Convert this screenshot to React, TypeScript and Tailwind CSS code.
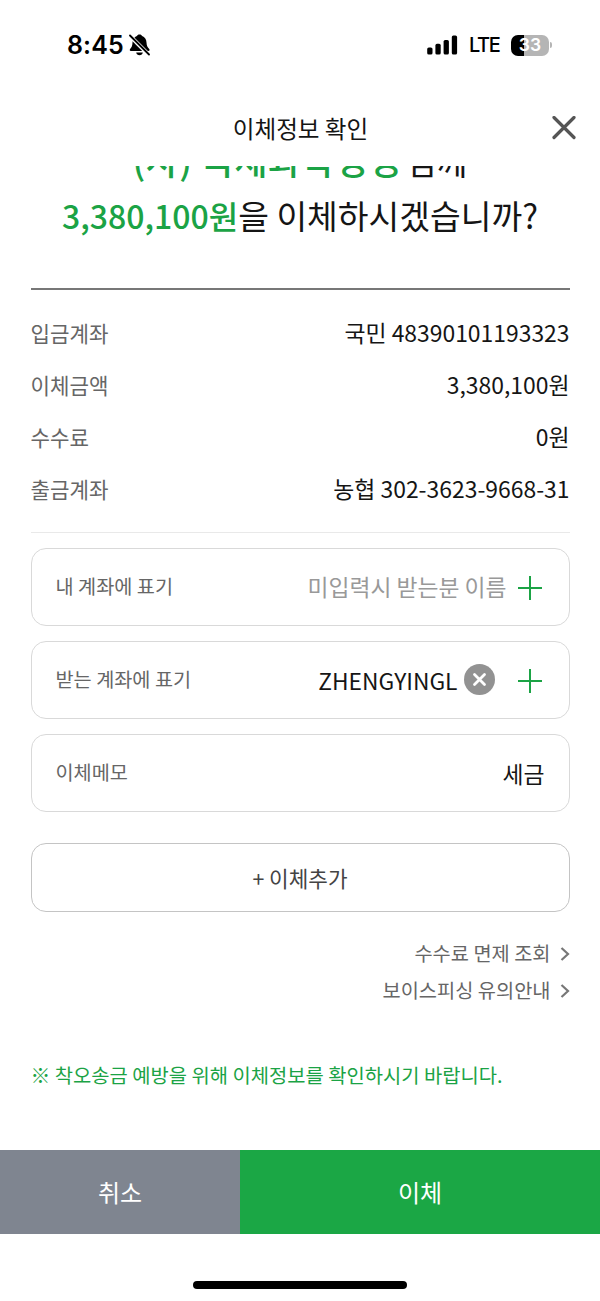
import type { ReactNode } from "react";

const details = [
  { label: "입금계좌", value: "국민 48390101193323" },
  { label: "이체금액", value: "3,380,100원" },
  { label: "수수료", value: "0원" },
  { label: "출금계좌", value: "농협 302-3623-9668-31" },
];

function StatusBar() {
  return (
    <div className="flex h-[90px] shrink-0 items-center justify-between pl-[67px] pr-[48px] text-black">
      <div className="flex items-center gap-[5px]">
        <span className="font-['Inter'] text-[25px] font-semibold leading-none tracking-[0.1px]">8:45</span>
        <svg width="22" height="22" viewBox="0 0 22 22">
          <path
            d="M10.500 0.500c1.300 0 2.300.6 2.600 1.600 2.800 1 4.300 3.400 4.400 6.400.1 3.500 1.200 5 2.700 6.500.8.800.4 2-.8 2H1.900c-1.200 0-1.500-1.200-.8-2C2.600 13.500 3.400 12 3.500 8.500c.1-3 1.600-5.400 4.400-6.400C8.200 1.100 9.200.5 10.500.5Z"
            fill="#000"
          />
          <path d="M7.200 18.500h6.600c-.3 1.800-1.600 2.800-3.300 2.800s-3-1-3.300-2.800Z" fill="#000" />
          <path d="M0 1 20.500 21.500" stroke="#fff" strokeWidth="4" />
          <path d="M1 1.500 20 20.500" stroke="#000" strokeWidth="1.800" strokeLinecap="round" />
        </svg>
      </div>
      <div className="flex items-center">
        <svg width="31" height="20" viewBox="0 0 31 20">
          <rect x="0.200" y="12.500" width="5.300" height="7" rx="1.600" />
          <rect x="8.400" y="8.800" width="5.300" height="10.700" rx="1.600" />
          <rect x="16.600" y="5" width="5.300" height="14.500" rx="1.600" />
          <rect x="24.800" y="0.500" width="5.300" height="19" rx="1.600" />
        </svg>
        <span className="ml-[11px] w-[42px] font-['Inter'] text-[20px] font-medium leading-none tracking-[-1.4px]">LTE</span>
        <div className="flex h-[21px] w-[38px] items-center justify-center rounded-[7px] bg-[linear-gradient(90deg,#000_33%,#b5b5b5_33%)]">
          <span className="font-['Inter'] text-[17.500px] font-semibold leading-none text-white">33</span>
        </div>
        <div className="ml-[1px] h-[6px] w-[2px] rounded-r-full bg-[#b5b5b5]" />
      </div>
    </div>
  );
}

function PlusIcon() {
  return (
    <svg className="mr-[3px]" width="24" height="24" viewBox="0 0 24 24" stroke="#1ba345" strokeWidth="2">
      <path d="M12 0v24M0 12h24" />
    </svg>
  );
}

function Field({ label, children }: { label: string; children: ReactNode }) {
  return (
    <div className="flex h-[78px] items-center justify-between rounded-[15px] border border-[#d9d9d9] px-[24px]">
      <span className="pb-[3px] text-[19.700px] text-[#666]">{label}</span>
      <div className="flex items-center pt-px text-[22.800px]">{children}</div>
    </div>
  );
}

function LinkRow({ text }: { text: string }) {
  return (
    <a className="flex h-[37px] items-center justify-end text-[19.750px] text-[#666]">
      {text}
      <svg className="ml-[9px] mt-[3px]" width="10" height="14" viewBox="0 0 10 14" fill="none" stroke="#777" strokeWidth="2.200">
        <path d="M1.500 1 8 7l-6.500 6" />
      </svg>
    </a>
  );
}

export default function App() {
  return (
    <div className="flex h-[1301px] w-[600px] flex-col overflow-hidden bg-white font-['Noto_Sans_CJK_KR',sans-serif] text-[#151515]">
      <StatusBar />

      <header className="flex h-[76px] shrink-0 items-center pr-[24px]">
        <h1 className="flex-1 pl-[49px] text-center text-[23.600px] leading-[30px]">이체정보 확인</h1>
        <button className="flex w-[24px]">
          <svg width="24" height="24" viewBox="0 0 24 24" stroke="#555" strokeWidth="3.200" strokeLinecap="round">
            <path d="M2 1.500l20 20M22 1.500l-20 20" />
          </svg>
        </button>
      </header>

      {/* 스크롤되어 첫 줄 윗부분은 헤더에 가려짐 */}
      <div className="flex h-[122px] shrink-0 flex-col overflow-hidden">
        <div className="-mt-[34px] text-center text-[33.400px]">
          <p className="leading-[54px]">
            <strong className="mr-[4px] text-[36px] font-medium tracking-[0.4px] text-[#1ba345]">(사) 국제과학경영</strong>님께
          </p>
          <p className="leading-[54px]">
            <strong className="text-[32px] font-medium text-[#1ba345]">3,380,100원</strong>을 이체하시겠습니까?
          </p>
        </div>
      </div>

      <main className="px-[30.500px]">
        <dl className="border-b border-t-2 border-b-[#e9e9e9] border-t-[#777] pb-[17px] pt-[17px]">
          {details.map((d) => (
            <div key={d.label} className="flex h-[52px] items-center justify-between pb-[2px]">
              <dt className="pt-[2px] text-[21.200px] text-[#666]">{d.label}</dt>
              <dd className="text-[22.900px]">{d.value}</dd>
            </div>
          ))}
        </dl>

        <div className="mt-[15px] flex flex-col gap-[15px]">
          <Field label="내 계좌에 표기">
            <span className="mr-[11px] text-[#999]">미입력시 받는분 이름</span>
            <PlusIcon />
          </Field>
          <Field label="받는 계좌에 표기">
            <span className="pt-px">ZHENGYINGL</span>
            <svg className="-mt-[3px] ml-[6px] mr-[23px]" width="31" height="31" viewBox="0 0 31 31">
              <circle cx="15.500" cy="15.500" r="15.500" fill="#929292" />
              <path d="M10.500 10.500l10 10M20.500 10.500l-10 10" stroke="#fff" strokeWidth="2.800" strokeLinecap="round" />
            </svg>
            <PlusIcon />
          </Field>
          <Field label="이체메모">
            <span className="pt-px">세금</span>
          </Field>
        </div>

        <button className="mt-[31px] flex h-[69px] w-full items-center justify-center rounded-[15px] border border-[#c4c4c4] text-[21.300px] text-[#444]">
          + 이체추가
        </button>

        <div className="mt-[22px]">
          <LinkRow text="수수료 면제 조회" />
          <LinkRow text="보이스피싱 유의안내" />
        </div>

        <p className="mt-[52px] text-[19.850px] text-[#1ba345]">※ 착오송금 예방을 위해 이체정보를 확인하시기 바랍니다.</p>
      </main>

      <footer className="mt-auto shrink-0">
        <div className="flex h-[84px] text-[24px] text-white">
          <button className="w-[240px] bg-[#7f8590]">취소</button>
          <button className="flex-1 bg-[#1ba745]">이체</button>
        </div>
        <div className="flex h-[67px] justify-center pt-[47px]">
          <div className="h-[8px] w-[214px] rounded-full bg-black" />
        </div>
      </footer>
    </div>
  );
}
